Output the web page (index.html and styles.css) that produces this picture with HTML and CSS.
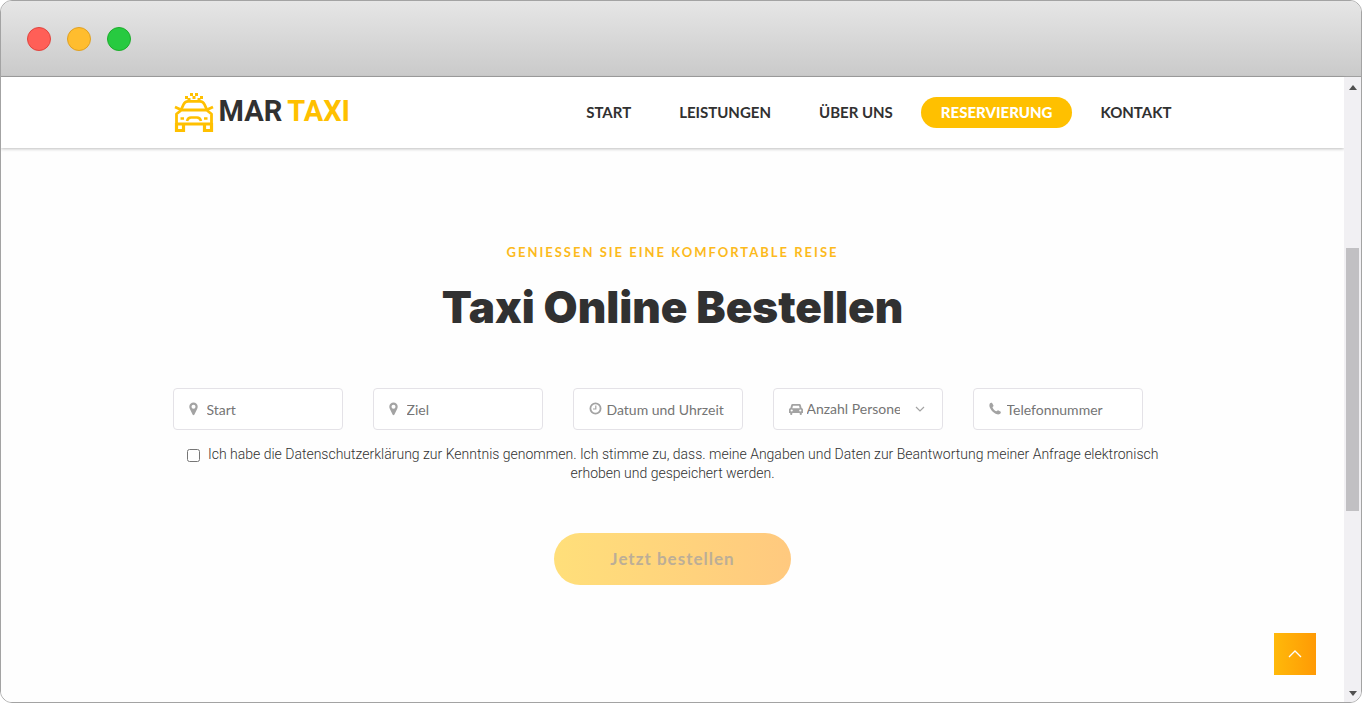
FILE: index.html
```html
<!DOCTYPE html>
<html lang="de">
<head>
<meta charset="utf-8">
<meta name="viewport" content="width=device-width, initial-scale=1">
<title>Mar Taxi – Taxi Online Bestellen</title>
<link rel="stylesheet" href="styles.css">
</head>
<body>
<div class="window">
  <div class="titlebar">
    <span class="dot dot-close"></span>
    <span class="dot dot-min"></span>
    <span class="dot dot-max"></span>
  </div>
  <div class="viewport">
    <div class="page">
      <header class="site-header">
        <div class="container header-row">
          <a class="logo" href="#">
            <svg class="logo-icon" viewBox="0 0 40 40" fill="none" stroke="currentColor" stroke-width="2.8">
              <path d="M7 17 9.500 11.500Q11 8.400 14 8.400H26Q29 8.400 30.500 11.500L33 17"/>
              <path d="M7.500 17H32.500L37.500 21V31H2.500V21Z" stroke-linejoin="round"/>
              <path d="M2.500 30V37.500H9.500V31M37.500 30V37.500H30.500V31" stroke-width="3.200"/>
              <path d="M1 14 6.500 16.500M39 14 33.500 16.500"/>
              <path d="M13 28Q14 24.500 17 24.500H23Q26 24.500 27 28" stroke-width="2.600"/>
              <path d="M6.500 25.500H10M30 25.500H33.500" stroke-width="2.600"/>
              <path fill="currentColor" stroke="none" d="M11 3h3v3h-3ZM16 0h3v3h-3ZM21 0h3v3h-3ZM18.500 3h3v3h-3ZM26 3h3v3h-3ZM13.500 5h3v3h-3ZM23.500 5h3v3h-3Z"/>
            </svg>
            <span class="logo-text">MAR<span class="logo-accent">TAXI</span></span>
          </a>
          <nav class="nav">
            <a class="nav-link" href="#">START</a>
            <a class="nav-link" href="#">LEISTUNGEN</a>
            <a class="nav-link" href="#">ÜBER UNS</a>
            <a class="nav-link nav-active" href="#">RESERVIERUNG</a>
            <a class="nav-link" href="#">KONTAKT</a>
          </nav>
        </div>
      </header>
      <main class="container booking">
        <p class="eyebrow">GENIESSEN SIE EINE KOMFORTABLE REISE</p>
        <h1 class="title">Taxi Online Bestellen</h1>
        <form class="form">
          <div class="fields">
            <label class="field">
              <svg class="icon" viewBox="0 0 14 14"><path fill="currentColor" fill-rule="evenodd" d="M4.500 .5a4.200 4.200 0 0 1 4.200 4.200c0 1-.3 1.700-.7 2.500L5.300 12.800c-.3.600-1.300.6-1.600 0L1 7.200C.6 6.400.3 5.700.3 4.700A4.200 4.200 0 0 1 4.500 .5ZM4.500 2.700a2 2 0 1 0 0 4 2 2 0 0 0 0-4Z"/></svg>
              <input class="control" type="text" placeholder="Start" aria-label="Start">
            </label>
            <label class="field">
              <svg class="icon" viewBox="0 0 14 14"><path fill="currentColor" fill-rule="evenodd" d="M4.500 .5a4.200 4.200 0 0 1 4.200 4.200c0 1-.3 1.700-.7 2.500L5.300 12.800c-.3.600-1.300.6-1.600 0L1 7.200C.6 6.400.3 5.700.3 4.700A4.200 4.200 0 0 1 4.500 .5ZM4.500 2.700a2 2 0 1 0 0 4 2 2 0 0 0 0-4Z"/></svg>
              <input class="control" type="text" placeholder="Ziel" aria-label="Ziel">
            </label>
            <label class="field">
              <svg class="icon" viewBox="0 0 14 14" fill="none" stroke="currentColor"><circle cx="6.500" cy="6.500" r="5.100" stroke-width="1.800"/><path d="M6.800 3.500V7H4" stroke-width="1.200"/></svg>
              <input class="control" type="text" placeholder="Datum und Uhrzeit" aria-label="Datum und Uhrzeit">
            </label>
            <label class="field">
              <svg class="icon" viewBox="0 0 14 14"><path fill="currentColor" fill-rule="evenodd" d="M3.500 2h7c.7 0 1.100.4 1.300 1l.8 3c.9.200 1.400.9 1.400 1.800V11h-1.200v1c0 1.300-2.100 1.300-2.100 0v-1H3.300v1c0 1.300-2.100 1.300-2.100 0v-1H0V7.800C0 6.900.5 6.200 1.400 6l.8-3c.2-.6.6-1 1.300-1ZM4 3.700 3.300 6.200h7.400L10 3.700ZM2.700 7.400a1.100 1.100 0 1 0 0 2.200 1.100 1.100 0 0 0 0-2.200Zm8.600 0a1.100 1.100 0 1 0 0 2.200 1.100 1.100 0 0 0 0-2.200Z"/></svg>
              <select class="control" aria-label="Anzahl Personen"><option>Anzahl Personen</option></select>
              <svg class="chevron" viewBox="0 0 10 10" fill="none" stroke="currentColor" stroke-width="1.200"><path d="M1 3 5 7 9 3"/></svg>
            </label>
            <label class="field">
              <svg class="icon" viewBox="0 0 14 14"><path fill="currentColor" d="M.7 1.800C1.200 1 2.500.6 3.100.9l1.500 2.800c.1.500-1.100 1.100-1.100 1.700.4 1.400 2.300 3.300 3.800 3.900.6.100 1.300-1.200 1.800-1l2.700 1.500c.3.900-.3 1.900-1.100 2.300-1.500.7-3.600.2-5.600-1.300C2.600 8.900.1 5.500.4 3Z"/></svg>
              <input class="control" type="tel" placeholder="Telefonnummer" aria-label="Telefonnummer">
            </label>
          </div>
          <div class="consent">
            <input class="check" type="checkbox" id="privacy">
            <label for="privacy">Ich habe die Datenschutzerklärung zur Kenntnis genommen. Ich stimme zu, dass. meine Angaben und Daten zur Beantwortung meiner Anfrage elektronisch erhoben und gespeichert werden.</label>
          </div>
          <button class="submit" type="submit" disabled>Jetzt bestellen</button>
        </form>
      </main>
    </div>
    <div class="scrollbar">
      <svg class="arrow" viewBox="0 0 8 5"><path fill="currentColor" d="M0 5 4 0 8 5Z"/></svg>
      <span class="thumb"></span>
      <svg class="arrow" viewBox="0 0 8 5"><path fill="currentColor" d="M0 0 4 5 8 0Z"/></svg>
    </div>
    <a class="to-top" href="#" aria-label="Nach oben">
      <svg viewBox="0 0 14 8" fill="none" stroke="currentColor" stroke-width="1.300"><path d="M1 7 7 1 13 7"/></svg>
    </a>
  </div>
</div>
</body>
</html>
```
FILE: styles.css
```css
* { box-sizing: border-box; }

body {
  margin: 0;
  background: #fff;
  color: #313131;
  font-family: Lato, sans-serif;
}

.window {
  display: flex;
  flex-direction: column;
  min-height: 100vh;
  border: 1px solid #a3a3a3;
  border-radius: 12px;
  overflow: hidden;
}

.titlebar {
  display: flex;
  align-items: center;
  gap: 16px;
  height: 76px;
  padding: 0 26px;
  background: linear-gradient(#e6e6e6, #cacaca);
  border-bottom: 1px solid #a0a0a0;
}

.dot {
  width: 24px;
  height: 24px;
  border: 1px solid;
  border-radius: 50%;
}
.dot-close { background: #ff5f57; border-color: #e0443e; }
.dot-min { background: #ffbd2e; border-color: #dfa023; }
.dot-max { background: #27ca40; border-color: #1dad2b; }

.viewport {
  position: relative;
  flex: 1;
  display: flex;
}

.page {
  flex: 1;
  min-width: 0;
  background: #fefefe;
}

.container {
  width: 100%;
  max-width: 1000px;
  margin: 0 auto;
}

.site-header {
  background: #fff;
  box-shadow: 0 1px 3px rgba(0, 0, 0, 0.25);
}

.header-row {
  display: flex;
  align-items: center;
  justify-content: space-between;
  height: 71px;
  padding: 0 1px;
}

.logo {
  display: flex;
  align-items: center;
  gap: 5px;
  color: #ffc000;
  text-decoration: none;
}
.logo-icon { width: 40px; height: 40px; }
.logo-text {
  display: flex;
  gap: 5px;
  padding-bottom: 4px;
  color: #313131;
  font: 700 29px/36px Roboto, sans-serif;
}
.logo-accent { color: #ffc000; }

.nav {
  display: flex;
  align-items: center;
  gap: 8px;
}
.nav-link {
  padding: 0 20px;
  color: #313131;
  font-size: 15px;
  font-weight: 700;
  line-height: 31px;
  text-decoration: none;
}
.nav-active {
  border-radius: 16px;
  background: #ffc000;
  color: #fff;
  font-weight: 900;
}
.nav-link:last-child { padding-right: 0; }

.booking {
  padding-top: 92px;
  text-align: center;
}

.eyebrow {
  margin: 0;
  color: #fcba1c;
  font-size: 13px;
  font-weight: 700;
  line-height: 24px;
  letter-spacing: 2px;
}

.title {
  margin: 15px 0 53px;
  font: 900 44px/56px Inter, sans-serif;
}

.fields {
  display: grid;
  grid-template-columns: repeat(5, 1fr);
  gap: 30px;
  padding-right: 30px;
}

.field {
  display: flex;
  align-items: center;
  height: 42px;
  padding: 0 15px;
  border: 1px solid #e4e2e7;
  border-radius: 4px;
  background: #fff;
}

.icon {
  flex: none;
  width: 14px;
  height: 14px;
  margin-right: 4px;
  color: #a3a3a3;
}

.chevron {
  flex: none;
  width: 10px;
  height: 10px;
  margin: 0 2px 0 15px;
  color: #a3a3a3;
}

.control {
  flex: 1;
  min-width: 0;
  width: 100%;
  padding: 2px 0 0;
  border: 0;
  outline: 0;
  appearance: none;
  background: transparent;
  color: #757575;
  font: 400 14px/20px Lato, sans-serif;
}
select.control { padding: 0; }
.control::placeholder { color: #757575; }

.consent {
  padding-top: 15px;
  font: 300 14px/19px Roboto, sans-serif;
}
.check {
  width: 13px;
  height: 13px;
  margin: 0 5px 0 0;
  vertical-align: -3px;
}

.submit {
  min-width: 237px;
  height: 52px;
  margin-top: 50px;
  border: 0;
  border-radius: 26px;
  background: linear-gradient(90deg, #ffdf7a, #ffc97f);
  color: #bcae97;
  font: 700 17px/24px Lato, sans-serif;
  letter-spacing: 1px;
}

.scrollbar {
  display: flex;
  flex-direction: column;
  align-items: center;
  width: 17px;
  padding: 8px 0 6px;
  background: #f1f0f3;
}
.arrow { flex: none; width: 8px; height: 5px; color: #505050; }
.thumb {
  width: 13px;
  height: 43%;
  margin: 158px 0 auto;
  background: #c1c0c3;
}

.to-top {
  position: absolute;
  right: 45px;
  bottom: 27px;
  display: grid;
  place-items: center;
  width: 42px;
  height: 42px;
  background: linear-gradient(90deg, #ffb90a, #ff9a05);
  color: #fff;
}
.to-top svg { width: 14px; height: 8px; }
```
